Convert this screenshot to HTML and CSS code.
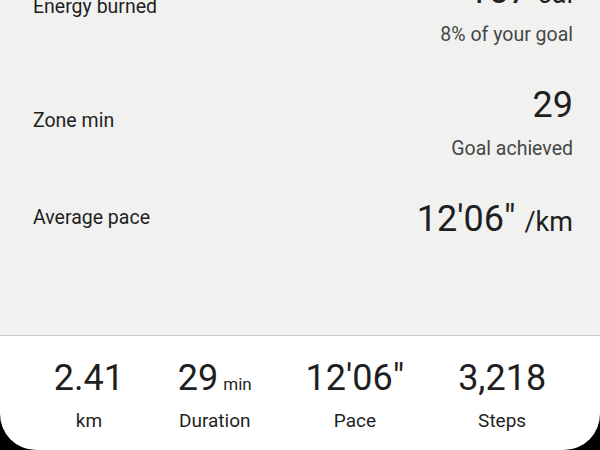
FILE: index.html
```html
<!DOCTYPE html>
<html lang="en">
<head>
    <meta charset="UTF-8">
    <meta name="viewport" content="width=device-width, initial-scale=1.0">
    <title>Run details</title>
    <link rel="stylesheet" href="styles.css">
</head>
<body>
    <div class="screen">
        <div class="details">
            <div class="row first">
                <div class="label">Energy burned</div>
                <div class="metric">
                    <div class="value">157 <span class="value-unit">cal</span></div>
                    <div class="sub">8% of your goal</div>
                </div>
            </div>
            <div class="row">
                <div class="label">Zone min</div>
                <div class="metric">
                    <div class="value">29</div>
                    <div class="sub">Goal achieved</div>
                </div>
            </div>
            <div class="row">
                <div class="label">Average pace</div>
                <div class="metric">
                    <div class="value">12'06" <span class="value-unit">/km</span></div>
                </div>
            </div>
        </div>

        <div class="summary">
            <div class="stat">
                <div class="stat-value">2.41</div>
                <div class="stat-label">km</div>
            </div>
            <div class="stat">
                <div class="stat-value">29<span class="unit">min</span></div>
                <div class="stat-label">Duration</div>
            </div>
            <div class="stat">
                <div class="stat-value">12'06"</div>
                <div class="stat-label">Pace</div>
            </div>
            <div class="stat">
                <div class="stat-value">3,218</div>
                <div class="stat-label">Steps</div>
            </div>
        </div>
    </div>
</body>
</html>
```

FILE: styles.css
```css
body {
    margin: 0;
    background: #000;
    font-family: 'Roboto', 'Noto Sans', sans-serif;
    color: #1f1f1f;
}
.screen {
    width: 600px;
    height: 450px;
    display: flex;
    flex-direction: column;
    overflow: hidden;
}
.details {
    flex: 1;
    background: #f1f2f0;
    padding: 0 27px 0 33px;
    border-bottom: 1px solid #c9cac8;
    overflow: hidden;
}
.row {
    display: flex;
    justify-content: space-between;
    align-items: center;
    margin-bottom: 36px;
}
.row.first {
    margin-top: -31px;
}
.label {
    font-size: 19.5px;
    line-height: 24px;
    color: #1f1f1f;
    margin-top: -3px;
}
.metric {
    text-align: right;
}
.value {
    font-size: 36px;
    line-height: 44px;
    color: #1f1f1f;
}
.value-unit {
    font-size: 27px;
    line-height: 1;
}
.sub {
    font-size: 19.5px;
    line-height: 24px;
    margin-top: 10px;
    color: #444746;
}
.summary {
    height: 114px;
    background: #fff;
    border-radius: 0 0 36px 36px;
    display: flex;
    justify-content: space-evenly;
    padding-top: 20px;
    box-sizing: border-box;
}
.stat {
    text-align: center;
}
.stat-value {
    font-size: 36px;
    line-height: 44px;
    color: #1f1f1f;
}
.unit {
    font-size: 17px;
    line-height: 1;
    margin-left: 5px;
}
.stat-label {
    font-size: 19px;
    line-height: 24px;
    margin-top: 9px;
    color: #1f1f1f;
}
```
